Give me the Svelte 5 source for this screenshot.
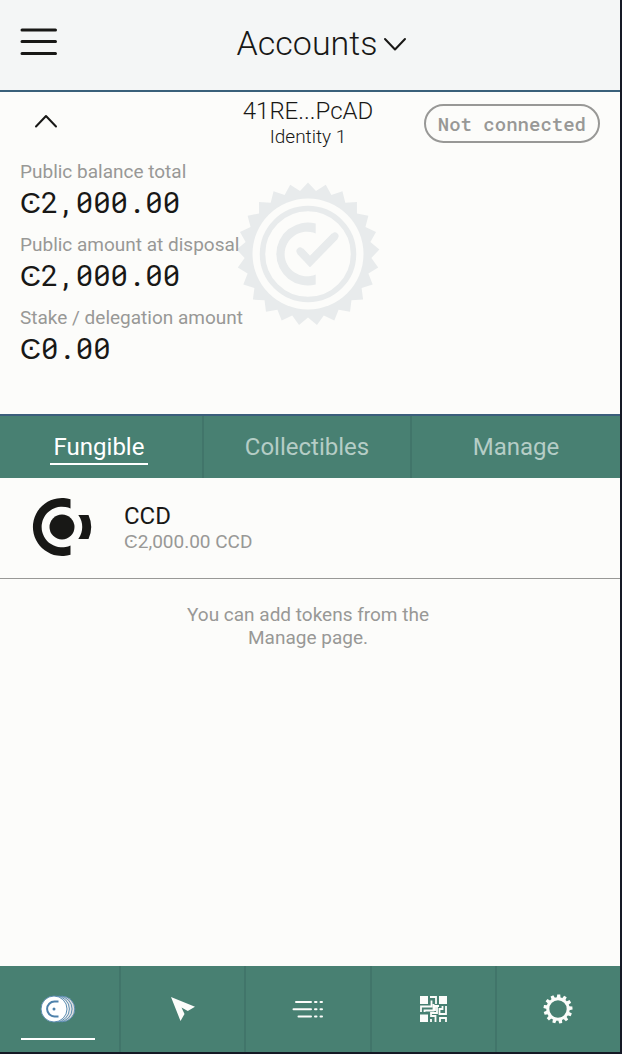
<script>
  const balances = [
    { label: 'Public balance total', value: '2,000.00' },
    { label: 'Public amount at disposal', value: '2,000.00' },
    { label: 'Stake / delegation amount', value: '0.00' },
  ];
  const tabs = ['Fungible', 'Collectibles', 'Manage'];
  let activeTab = $state('Fungible');
  let open = $state(true);

  // Outline of a ring of triangular teeth around a centre point.
  function teeth(count, outer, inner, start) {
    const points = [];
    for (let i = 0; i < count * 2; i++) {
      const r = i % 2 ? inner : outer;
      const a = ((start + (i * 180) / count) * Math.PI) / 180;
      points.push(`${(r * Math.cos(a)).toFixed(2)},${(r * Math.sin(a)).toFixed(2)}`);
    }
    return points.join(' ');
  }
  const sealEdge = teeth(25, 71.5, 63.5, -90);
  const cogAngles = Array.from({ length: 13 }, (_, i) => (i * 360) / 13 + 3);
</script>

<div class="window">
  <header class="top">
    <button class="plain menu" aria-label="Menu">
      <svg width="38" height="28" viewBox="0 0 38 28" stroke="#181816" stroke-width="3" stroke-linecap="round">
        <path d="M2 2h33.500M2 13.600h33.500M2 25.400h33.500" />
      </svg>
    </button>
    <h1>
      <button class="plain title">
        Accounts
        <svg width="24" height="14" viewBox="0 0 24 14" fill="none" stroke="#181816" stroke-width="2" stroke-linecap="round" stroke-linejoin="round">
          <path d="M2 2l10 10.500L22 2" />
        </svg>
      </button>
    </h1>
  </header>

  <main>
    <section class="account">
      <div class="bar">
        <button class="plain toggle" aria-label="Toggle details" aria-expanded={open} onclick={() => (open = !open)}>
          <svg width="24" height="14" viewBox="0 0 24 14" fill="none" stroke="#181816" stroke-width="2" stroke-linecap="round" stroke-linejoin="round">
            <path d="M2 12.500L12 2l10 10.500" />
          </svg>
        </button>
        <div class="who">
          <div class="address">41RE...PcAD</div>
          <div class="identity">Identity 1</div>
        </div>
        <button class="status">Not connected</button>
      </div>
      <div class="details">
        <svg class="seal" width="144" height="144" viewBox="-72 -72 144 144" fill="none" stroke="#e8ebec" aria-hidden="true">
          <polygon points={sealEdge} fill="#e8ebec" stroke="none" />
          <circle r="55.500" fill="#fcfcfa" stroke="none" />
          <circle r="45.500" stroke-width="5.500" />
          <path d="M7.700 -30.500A31.500 31.500 0 1 0 7.700 30.500V20.500A22.300 22.300 0 1 1 7.700 -20.500Z" fill="#e8ebec" stroke="none" />
          <path d="M-8 -3L2 7.500L27 -18" stroke-width="8" />
          <path d="M-8 -3L2 7.500L27 -18" stroke-width="7" stroke-linecap="round" />
        </svg>
        <dl>
          {#each balances as b}
            <div class="balance">
              <dt>{b.label}</dt>
              <dd><span class="unit">Ͼ</span>{b.value}</dd>
            </div>
          {/each}
        </dl>
      </div>
    </section>

    <nav class="tabs">
      {#each tabs as tab}
        <button class="plain" class:active={tab === activeTab} onclick={() => (activeTab = tab)}><span>{tab}</span></button>
      {/each}
    </nav>

    <a class="token" href="#ccd">
      <svg width="60" height="60" viewBox="-30 -30 60 60" aria-hidden="true">
        <path d="M8.500 -27.700A29 29 0 1 0 8.500 27.700V18.400A20.300 20.300 0 1 1 8.500 -18.400Z" fill="#181816" />
        <circle r="12.500" fill="#181816" />
        <path d="M16.300 -12H26.500A29 29 0 0 1 26.500 12H16.300A20.300 20.300 0 0 0 16.300 -12Z" fill="#181816" />
      </svg>
      <div>
        <div class="name">CCD</div>
        <div class="amount">Ͼ2,000.00 CCD</div>
      </div>
    </a>
    <p class="hint">You can add tokens from the Manage page.</p>
  </main>

  <nav class="bottom">
    <a href="#accounts" class="current" aria-label="Accounts">
      <svg width="36" height="28" viewBox="0 0 36 28" stroke="#5b8cb0" stroke-width="1">
        <circle cx="22" cy="14" r="12.800" fill="#dcdcdc" />
        <circle cx="19.300" cy="14" r="12.800" fill="#e8e8e8" />
        <circle cx="16.600" cy="14" r="12.800" fill="#f5f5f5" />
        <circle cx="14" cy="14" r="13" fill="#fff" />
        <path d="M18.500 6.600h-4a7.400 7.400 0 0 0 0 14.800h4" fill="none" stroke="#4e81ab" stroke-width="2" />
        <circle cx="14" cy="14" r="1.500" fill="#4e81ab" stroke="none" />
      </svg>
    </a>
    <a href="#send" aria-label="Send">
      <svg width="24" height="24" viewBox="0 0 24 24"><path d="M0 0L24 9.800L16.800 14L10.500 10.500L13.500 17L9.500 24Z" fill="#fcfcfa" /></svg>
    </a>
    <a href="#activity" aria-label="Activity">
      <svg width="32" height="20" viewBox="0 0 32 20" stroke="#fcfcfa" stroke-width="2" stroke-linecap="round">
        <path d="M4 3h15M1.500 10.200h17.500M6.500 17.500h12.500M23 3h1.500M28.500 3h1.500M23 10.200h1.500M28.500 10.200h1.500M23 17.500h1.500M28.500 17.500h1.500" />
      </svg>
    </a>
    <a href="#identity" aria-label="Identity">
      <svg width="27" height="26" viewBox="0 0 27 26" fill="#fcfcfa">
        <path d="M0 0h8v8H0zM19 0h8v8h-8zM0 18.500h8V26H0z" />
        <path d="M10 1h6v7M11.500 4.500v6H1v5.500M4.500 16v-1.500h9V8M19 10h-4v4h-2M26 10v8h-6.500v-5h3V10M17 10v7h-6v3h4.500v6M11 23v3M20 26v-4h6v4" fill="none" stroke="#fcfcfa" stroke-width="1.800" />
      </svg>
    </a>
    <a href="#settings" aria-label="Settings">
      <svg width="30" height="30" viewBox="-15 -15 30 30">
        <circle r="10.200" fill="none" stroke="#fcfcfa" stroke-width="3" />
        {#each cogAngles as angle}
          <path d="M-1.900 -11L-1.500 -14.500H1.500L1.900 -11Z" fill="#fcfcfa" transform="rotate({angle})" />
        {/each}
      </svg>
    </a>
  </nav>
</div>

<style>
  :global(body) { margin: 0; background: #10141f; }
  .window {
    box-sizing: border-box;
    min-height: 100vh;
    margin-left: -4px;
    display: flex;
    flex-direction: column;
    border: solid #151925;
    border-width: 0 2px 2px 0;
    background: #fcfcfa;
    color: #181816;
    font-family: Roboto, sans-serif;
  }
  svg { display: block; }
  a { color: inherit; text-decoration: none; }
  .plain { border: 0; padding: 0; background: none; font: inherit; color: inherit; cursor: pointer; }
  .top {
    display: grid;
    grid-template-columns: 1fr auto 1fr;
    align-items: center;
    height: 90px;
    padding: 0 20px 0 24px;
    background: #f4f6f6;
    border-bottom: 2px solid #39607a;
  }
  .menu { justify-self: start; padding-bottom: 6px; }
  h1 { margin: 0; padding: 0 0 4px 24px; font-weight: 300; font-size: 34px; line-height: 42px; }
  .title { display: flex; align-items: center; gap: 6px; }
  .title svg { margin-top: 2px; }
  main { flex: 1; display: flex; flex-direction: column; }
  .account { border-bottom: 2px solid #3b5e7b; padding-bottom: 52px; }
  .bar {
    display: grid;
    grid-template-columns: 1fr auto 1fr;
    align-items: center;
    height: 62px;
    padding: 0 20px 2px 20px;
  }
  .toggle { justify-self: start; padding: 0 18px 4px; }
  .who { text-align: center; font-weight: 300; }
  .address { font-size: 24px; line-height: 28px; }
  .identity { font-size: 19px; line-height: 24px; }
  .status {
    justify-self: end;
    height: 39px;
    padding: 0 12px;
    border: 2px solid #989896;
    border-radius: 20px;
    background: none;
    color: #989896;
    font: 500 19px "Roboto Mono", "Liberation Mono", monospace;
    white-space: nowrap;
  }
  .details { position: relative; padding: 0 20px 0 24px; }
  .seal { position: absolute; left: 50%; top: 26px; margin-left: -72px; }
  dl { position: relative; margin: 0; padding-top: 4px; }
  .balance { height: 73px; }
  .balance:last-child { height: 56px; }
  dt { color: #989896; font-size: 19px; line-height: 24px; }
  dd { margin: 0; font: 29px/36px "Roboto Mono", "DejaVu Sans Mono", monospace; }
  .unit { font-family: Roboto, sans-serif; }
  .tabs { display: grid; grid-template-columns: repeat(3, 1fr); height: 62px; background: #488072; color: #b5cdc6; font-size: 24px; }
  .tabs button { padding-top: 4px; border-right: 2px solid #41756a; }
  .tabs button:last-child { border-right: 0; }
  .tabs span { display: inline-block; padding: 0 4px 2px; line-height: 28px; border-bottom: 2px solid transparent; }
  .tabs .active { color: #fff; }
  .tabs .active span { border-color: #fff; }
  .token { display: flex; align-items: center; gap: 32px; height: 98px; padding: 0 32px 2px 36px; border-bottom: 1px solid #989896; }
  .name { padding-top: 2px; font-size: 24px; line-height: 28px; }
  .amount { color: #989896; font-size: 19px; line-height: 24px; }
  .hint { width: 40%; margin: 24px auto; text-align: center; color: #989896; font-size: 19px; line-height: 23px; }
  .bottom { display: flex; height: 86px; background: #488072; }
  .bottom a { position: relative; flex: 1; display: grid; place-items: center; border-right: 2px solid #41756a; }
  .bottom a:last-child { border-right: 0; }
  .current::after { content: ""; position: absolute; left: 20%; right: 20%; bottom: 12px; height: 2px; background: #fff; }
</style>
